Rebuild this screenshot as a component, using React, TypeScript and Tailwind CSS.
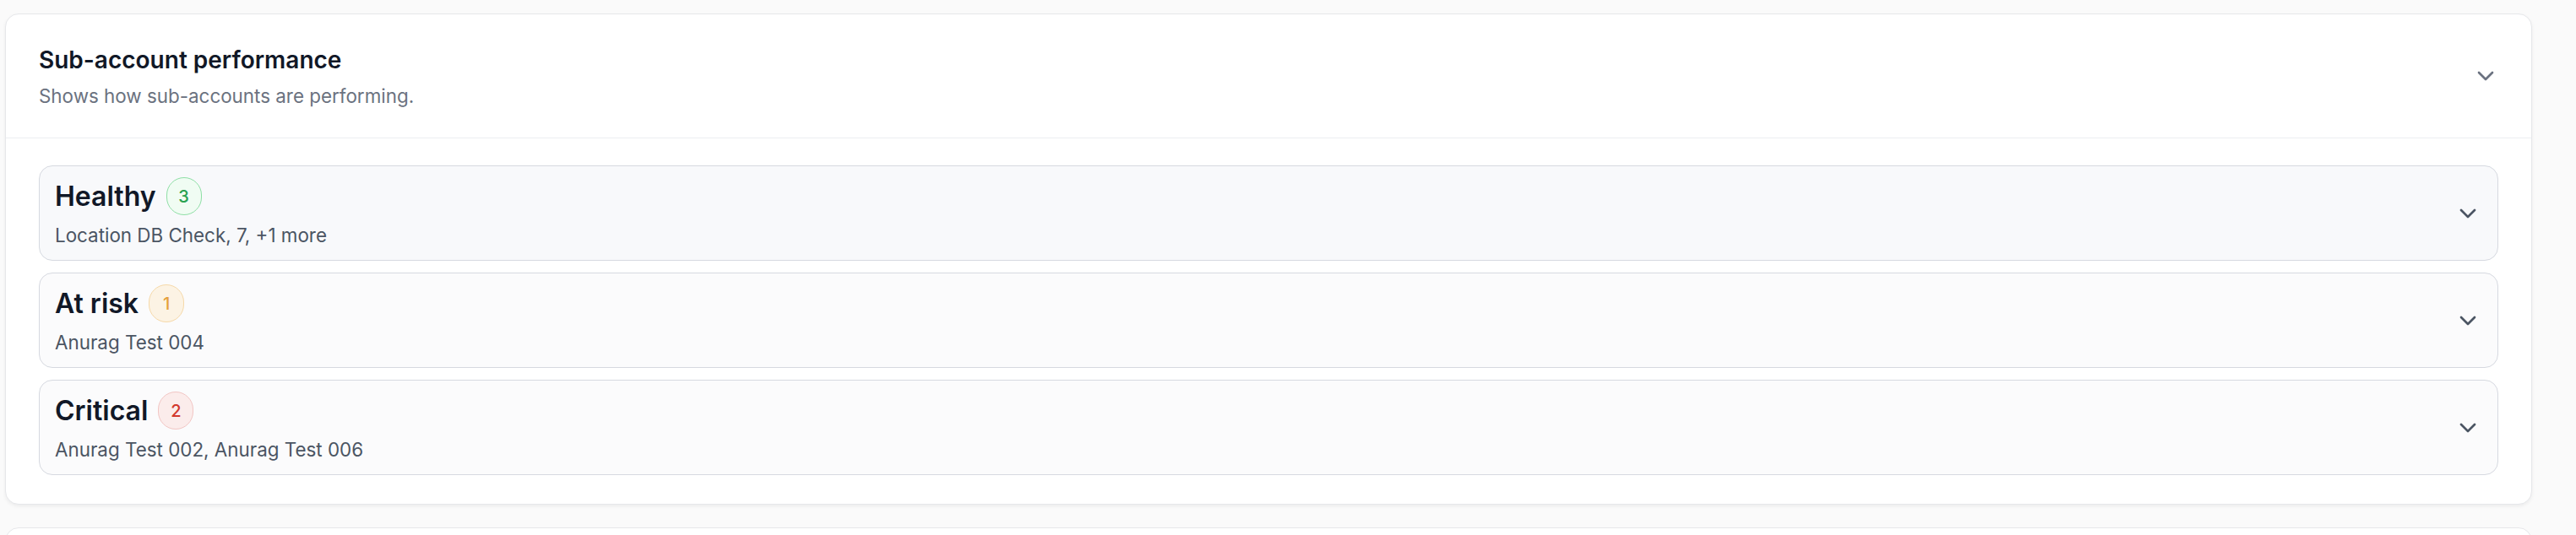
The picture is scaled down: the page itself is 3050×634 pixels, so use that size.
import { ChevronDown } from "lucide-react";

type Group = {
  title: string;
  count: number;
  names: string;
  itemBg: string;
  badge: string;
};

const groups: Group[] = [
  {
    title: "Healthy",
    count: 3,
    names: "Location DB Check, 7, +1 more",
    itemBg: "bg-[#f8f9fb]",
    badge: "border-[#8fdfa6] bg-[#f0fcf3] text-[#2aa251]",
  },
  {
    title: "At risk",
    count: 1,
    names: "Anurag Test 004",
    itemBg: "bg-[#fbfbfc]",
    badge: "border-[#f6d9a9] bg-[#fcf3e4] text-[#e5a03c]",
  },
  {
    title: "Critical",
    count: 2,
    names: "Anurag Test 002, Anurag Test 006",
    itemBg: "bg-[#fbfbfc]",
    badge: "border-[#f2c6c4] bg-[#fbeceb] text-[#d2382d]",
  },
];

function GroupRow({ group }: { group: Group }) {
  return (
    <div
      className={`flex h-[113px] items-center justify-between rounded-[16px] border border-[#d6d9e0] pl-[18px] pr-[19px] ${group.itemBg}`}
    >
      <div className="flex flex-col gap-[8px]">
        <div className="flex items-center gap-[12px]">
          <span className="text-[32px] font-semibold leading-[40px] text-[#111827]">
            {group.title}
          </span>
          <span
            className={`flex h-[45px] min-w-[42px] items-center justify-center rounded-full border px-[12px] text-[20px] font-medium ${group.badge}`}
          >
            {group.count}
          </span>
        </div>
        <span className="text-[22.4px] leading-[32px] text-[#4b5563]">{group.names}</span>
      </div>
      <ChevronDown size={32} className="text-[#4b5563]" />
    </div>
  );
}

export default function App() {
  return (
    <div className="min-h-screen bg-[#fafafa] pt-[16px] pl-[6px] pr-[52px] font-['Inter',sans-serif]">
      <section className="rounded-[16px] border border-[#e6e7ea] bg-white shadow-[0_2px_4px_rgba(0,0,0,0.06)]">
        <header className="flex h-[147px] items-center justify-between border-b border-[#eceef1] pl-[39px] pr-[38px]">
          <div className="flex flex-col gap-[7px]">
            <h2 className="text-[28px] font-semibold leading-[40px] text-[#111827]">
              Sub-account performance
            </h2>
            <p className="text-[22.4px] leading-[32px] text-[#6b7280]">
              Shows how sub-accounts are performing.
            </p>
          </div>
          <ChevronDown size={32} className="text-[#6b7280]" />
        </header>
        <div className="flex flex-col gap-[14px] px-[39px] pt-[32px] pb-[34px]">
          {groups.map((g) => (
            <GroupRow key={g.title} group={g} />
          ))}
        </div>
      </section>
      <section className="mt-[27px] h-[200px] rounded-[16px] border border-[#e6e7ea] bg-white" />
    </div>
  );
}
